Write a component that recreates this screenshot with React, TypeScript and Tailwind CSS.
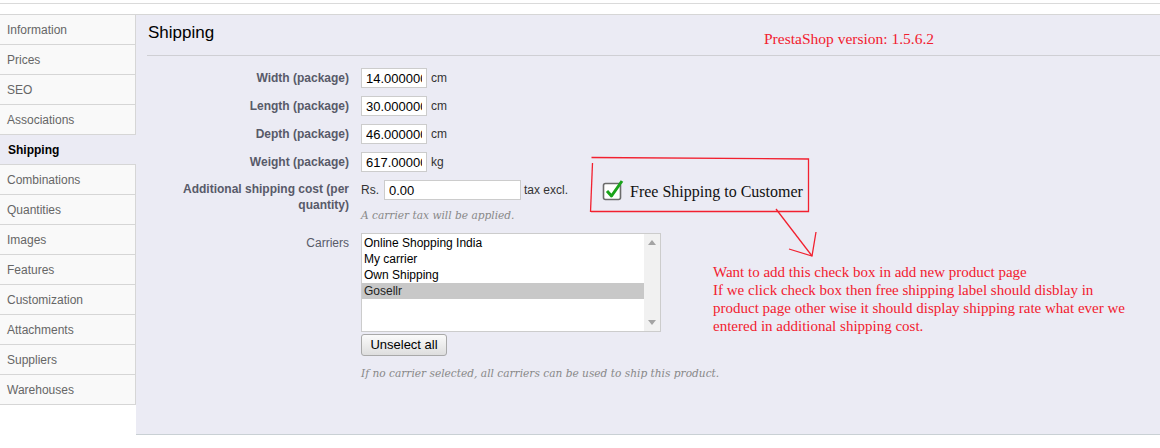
import React from 'react'

const tabs = [
  'Information',
  'Prices',
  'SEO',
  'Associations',
  'Shipping',
  'Combinations',
  'Quantities',
  'Images',
  'Features',
  'Customization',
  'Attachments',
  'Suppliers',
  'Warehouses',
]

const dims = [
  { label: 'Width (package)', value: '14.000000', unit: 'cm' },
  { label: 'Length (package)', value: '30.000000', unit: 'cm' },
  { label: 'Depth (package)', value: '46.000000', unit: 'cm' },
  { label: 'Weight (package)', value: '617.000000', unit: 'kg' },
]

const carriers = ['Online Shopping India', 'My carrier', 'Own Shipping', 'Gosellr']

export default function App() {
  return (
    <div className="relative w-[1160px] h-[448px] bg-white overflow-hidden font-['Liberation_Sans',Arial,sans-serif] text-[12px]">
      {/* top strip */}
      <div className="h-[14px] pt-[3px]">
        <div className="border-t border-[#dadada]" />
      </div>

      <div className="flex border-t border-[#d6d6d6]">
        {/* tabs */}
        <div className="w-[136px] shrink-0">
          {tabs.map((t) => {
            const active = t === 'Shipping'
            return (
              <div
                key={t}
                className={
                  active
                    ? 'h-[30px] pl-[8px] flex items-center border-b border-[#d6d6d6] bg-[#ebebf4] font-bold text-black'
                    : 'h-[30px] pl-[7px] flex items-center border-b border-r border-[#d6d6d6] bg-[#f9f9f9] text-[#666]'
                }
              >
                {t}
              </div>
            )
          })}
        </div>

        {/* panel */}
        <div className="flex-1 h-[420px] bg-[#ebebf4] border-b border-[#c9d0d4] pl-[11px]">
          <div className="h-[41px] pt-[8px] pl-px border-b border-[#cfcfd4]">
            <span className="text-[17px] leading-[20px] text-black">Shipping</span>
          </div>

          <div className="pt-[12px]">
            {dims.map((d) => (
              <div key={d.label} className="flex items-center h-[20px] mb-[8px]">
                <div className="w-[202px] text-right font-bold text-[#585a69]">{d.label}</div>
                <input
                  readOnly
                  value={d.value}
                  className="ml-[12px] w-[66px] h-[20px] px-[4px] bg-white border border-[#ccc] text-[13px] text-black outline-none"
                />
                <span className="ml-[4px] text-[#333]">{d.unit}</span>
              </div>
            ))}

            <div className="flex items-start mt-[1px]">
              <div className="w-[202px] text-right font-bold text-[#585a69] leading-[16px] pt-[1px]">
                Additional shipping cost (per
                <br />
                quantity)
              </div>
              <div className="ml-[12px]">
                <div className="flex items-center h-[20px]">
                  <span className="text-[#333]">Rs.</span>
                  <input
                    readOnly
                    value="0.00"
                    className="ml-[5px] w-[137px] h-[20px] px-[4px] bg-white border border-[#ccc] text-[13px] text-black outline-none"
                  />
                  <span className="ml-[3px] text-[#333]">tax excl.</span>
                </div>
                <div className="mt-[8px] leading-[14px] italic text-[#888] font-['DejaVu_Serif',Georgia,serif] text-[10.6px]">
                  A carrier tax will be applied.
                </div>
              </div>
            </div>

            <div className="flex items-start mt-[11px]">
              <div className="w-[202px] text-right text-[#585a69] pt-[2px] leading-[16px]">Carriers</div>
              <div className="ml-[12px]">
                <div className="flex w-[300px] h-[99px] bg-white border border-[#ccc]">
                  <div className="flex-1 pt-px">
                    {carriers.map((c) => (
                      <div
                        key={c}
                        className={
                          c === 'Gosellr'
                            ? 'h-[16px] leading-[16px] pl-[2px] bg-[#c8c8c8] text-[#222]'
                            : 'h-[16px] leading-[16px] pl-[2px] text-black'
                        }
                      >
                        {c}
                      </div>
                    ))}
                  </div>
                  <div className="w-[16px] bg-[#f1f1f1] flex flex-col items-center justify-between py-[6px]">
                    <svg width="8" height="5" viewBox="0 0 8 5">
                      <path d="M0 5 L4 0 L8 5 Z" fill="#a3a3a3" />
                    </svg>
                    <svg width="8" height="5" viewBox="0 0 8 5">
                      <path d="M0 0 L4 5 L8 0 Z" fill="#a3a3a3" />
                    </svg>
                  </div>
                </div>
                <button className="mt-[2px] h-[22px] w-[86px] rounded-[3px] border border-[#a9a9a9] bg-gradient-to-b from-[#fbfbfb] to-[#dedede] text-[13px] text-black">
                  Unselect all
                </button>
                <div className="mt-[10px] leading-[14px] italic text-[#888] font-['DejaVu_Serif',Georgia,serif] text-[10.6px]">
                  If no carrier selected, all carriers can be used to ship this product.
                </div>
              </div>
            </div>
          </div>
        </div>
      </div>

      {/* annotations drawn over the screenshot */}
      <div className="absolute left-[764px] top-[30px] font-['Liberation_Serif','Times_New_Roman',serif] text-[15.5px] leading-[18px] text-[#f2202f]">
        PrestaShop version: 1.5.6.2
      </div>

      <svg className="absolute left-0 top-0" width="1160" height="448" viewBox="0 0 1160 448" fill="none">
        <path d="M591.5 157.5 L808.5 159 L808.5 211.5 L591 211.5" stroke="#f2202f" strokeWidth="1.3" />
        <path d="M592.5 163 L590.5 212" stroke="#f2202f" strokeWidth="1.3" />
        <path d="M776 209 L812 256" stroke="#f2202f" strokeWidth="1.3" />
        <path d="M789 249 L812 256 L816 232" stroke="#f2202f" strokeWidth="1.3" />
      </svg>

      <div className="absolute left-[602px] top-[179px] flex items-center">
        <svg width="22" height="22" viewBox="0 0 22 22">
          <rect x="1.5" y="4.5" width="17" height="16" rx="2" fill="#fff" stroke="#6b6b6b" strokeWidth="1.6" />
          <path d="M5 12 L9.5 17 L20 2" stroke="#1aa31a" strokeWidth="3" fill="none" strokeLinejoin="round" />
        </svg>
        <span className="ml-[6px] font-['Liberation_Serif','Times_New_Roman',serif] text-[16px] leading-[18px] text-[#111] pt-[3px]">
          Free Shipping to Customer
        </span>
      </div>

      <div className="absolute left-[713px] top-[263px] font-['Liberation_Serif','Times_New_Roman',serif] text-[15px] leading-[18px] text-[#f2202f]">
        Want to add this check box in add new product page
        <br />
        If we click check box then free shipping label should disblay in
        <br />
        product page other wise it should display shipping rate what ever we
        <br />
        entered in additional shipping cost.
      </div>
    </div>
  )
}
